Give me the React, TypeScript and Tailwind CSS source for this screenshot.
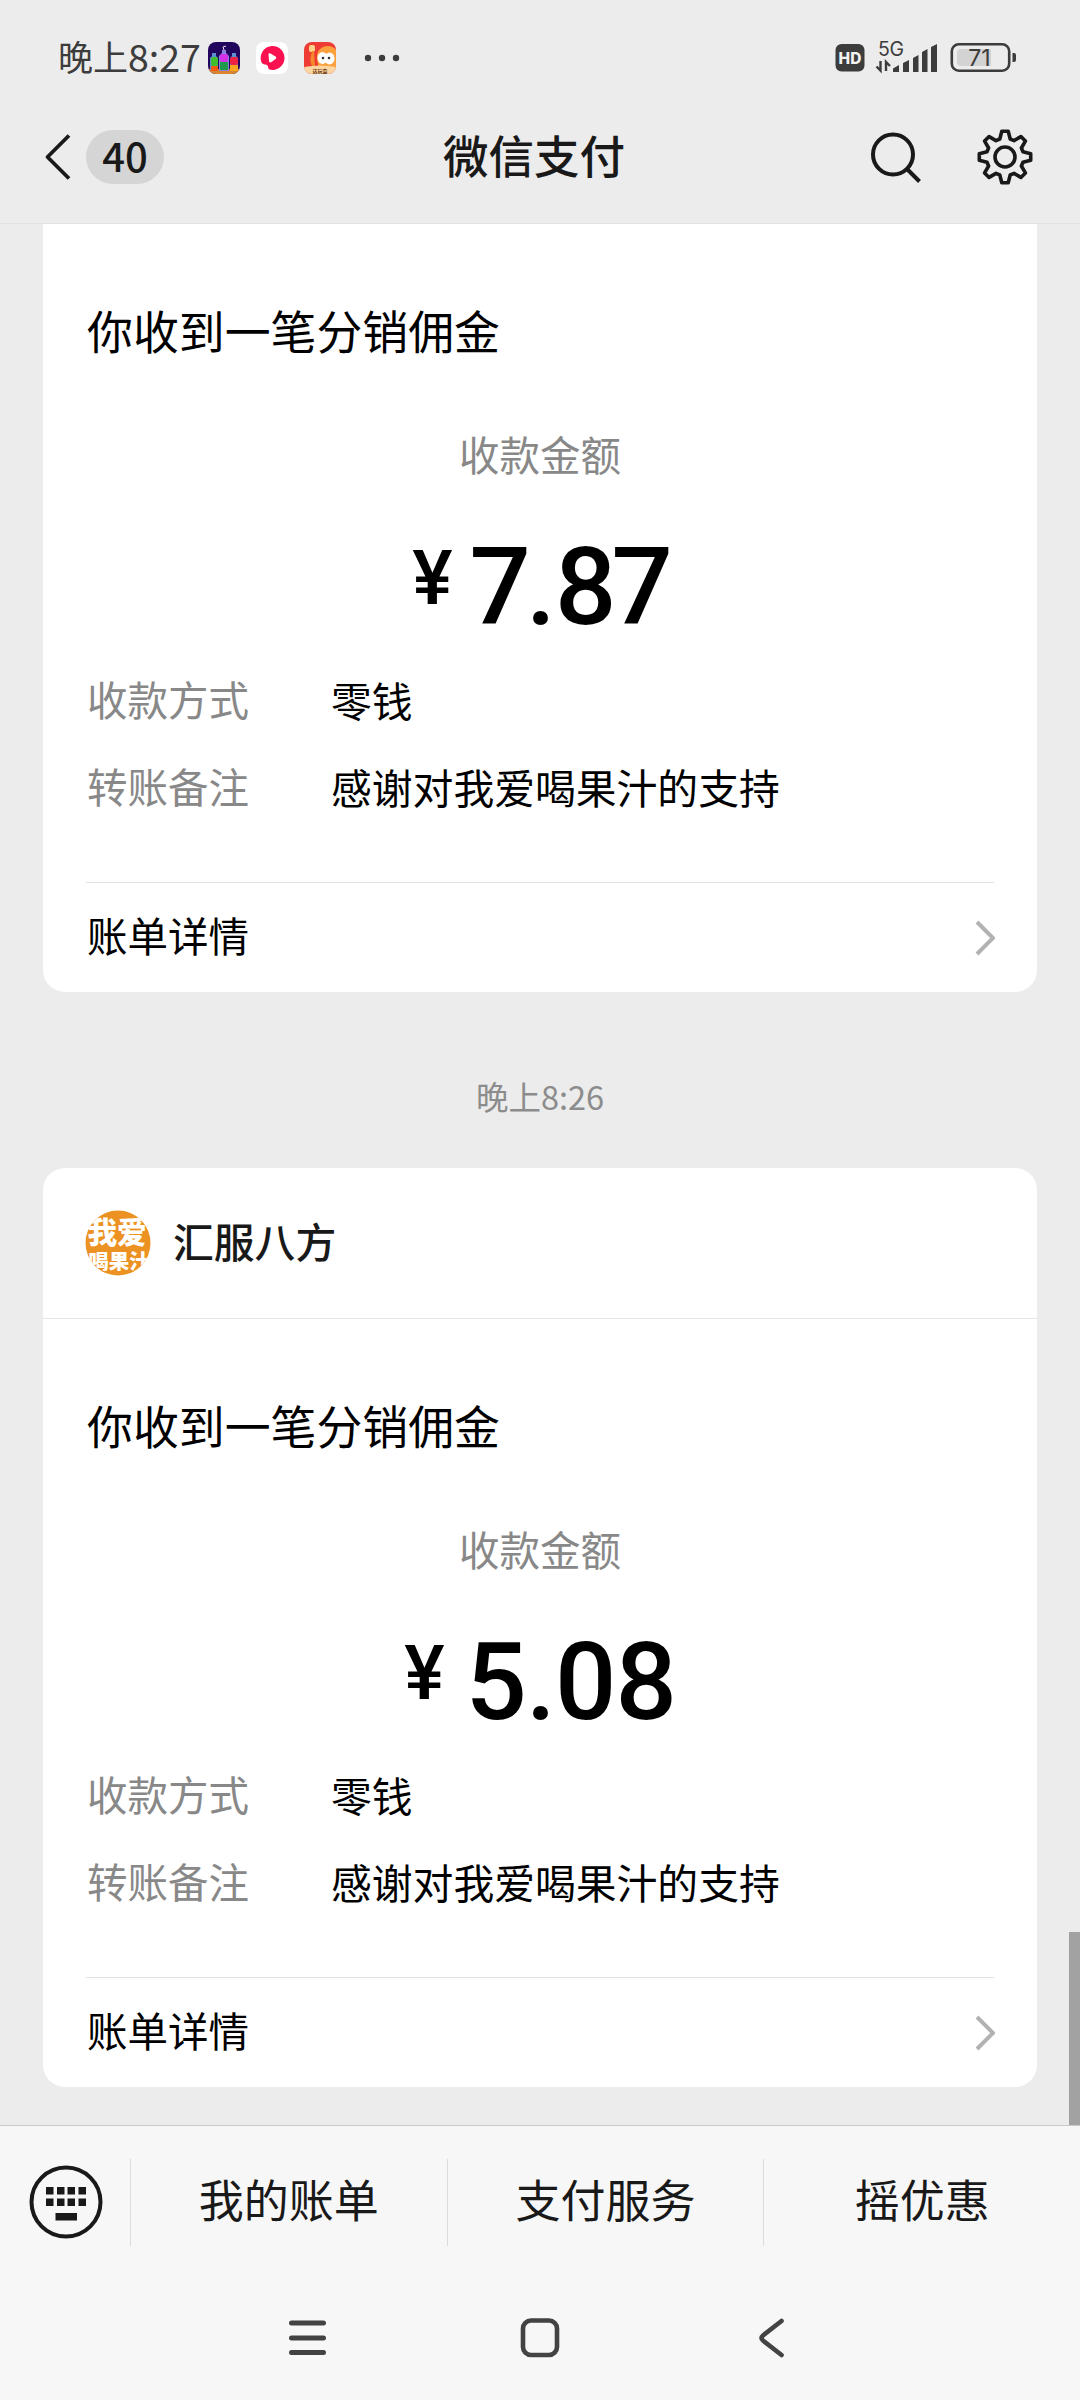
import React from 'react';

interface PaymentCardProps {
  amount: string;
  sender?: string;
}

const MENU_ITEMS = ['我的账单', '支付服务', '摇优惠'];

const StatusBar: React.FC = () => (
  <div className="h-[116px] pt-[32px] pl-[58px] flex items-start text-[#3c3c3c]">
    <div className="h-[49px] w-[150px] flex items-center whitespace-nowrap">
      <span className="text-[35px]">晚上</span>
      <span className="text-[37.5px]">8:27</span>
    </div>
    <div className="h-[52px] flex items-center gap-[16px]">
      <svg width="32" height="32" viewBox="0 0 32 32">
        <defs>
          <clipPath id="app-a"><rect width="32" height="32" rx="8" /></clipPath>
        </defs>
        <g clipPath="url(#app-a)">
          <rect width="32" height="32" fill="#22065e" />
          <rect y="27" width="32" height="5" fill="#d98532" />
          <path d="M4 11h4v3l2 2v12H2V16l2-2z" fill="#5a8fd0" />
          <rect x="3" y="15" width="7" height="9" rx="2" fill="#3fbf2e" />
          <rect x="3" y="24" width="7" height="5" fill="#f25a14" />
          <path d="M14 8h4v3l3 3v15H11V14l3-3z" fill="#8d7fe0" />
          <rect x="12" y="12" width="8" height="8" rx="2" fill="#d531e8" />
          <rect x="12" y="20" width="8" height="8" fill="#1f9a4c" />
          <path d="M24 11h4v3l2 2v12h-8V16l2-2z" fill="#5a8fd0" />
          <rect x="22" y="15" width="8" height="8" rx="2" fill="#ee2244" />
          <rect x="22" y="23" width="8" height="6" fill="#f9a51e" />
          <path d="M16 8l-1-3 3-1" stroke="#f0e0f0" fill="none" />
        </g>
      </svg>
      <svg width="32" height="32" viewBox="0 0 32 32">
        <rect width="32" height="32" rx="8" fill="#fff" />
        <path d="M16 4a12 12 0 1 1-2.500 23.600c-1.500-.3-1-3-2-4.200s-4.500-.6-6-3A12 12 0 0 1 16 4z" fill="#fb1150" />
        <path d="M12.500 12.500c0-1.200 1-1.600 2-1l5 3c1 .7 1 1.800 0 2.500l-4 3c-1.200.8-2.200.6-2.400-.6z" fill="#fff" />
      </svg>
      <svg width="32" height="32" viewBox="0 0 32 32">
        <defs>
          <clipPath id="app-c"><rect width="32" height="32" rx="8" /></clipPath>
        </defs>
        <g clipPath="url(#app-c)">
          <rect width="32" height="32" fill="#ee3b33" />
          <path d="M13 17c-1-8 4-13 11-13 5 0 8 3 9 6v18H15z" fill="#fba03c" />
          <rect x="5" y="3" width="6" height="7" rx="2" fill="#ffd28a" />
          <path d="M8 9c-1 6-3 8 0 15h3l-1-15z" fill="#f48a2c" />
          <ellipse cx="18.500" cy="16" rx="5" ry="6" fill="#fff" />
          <ellipse cx="25.500" cy="16.500" rx="5" ry="6" fill="#fff" />
          <circle cx="19" cy="16" r="1.300" fill="#333" />
          <circle cx="25" cy="16" r="1.300" fill="#333" />
          <path d="M0 25q16-3 32 0v7H0z" fill="#fcd6a0" />
          <text x="16" y="30.500" textAnchor="middle" fontSize="5" fontWeight="700" fill="#6b3510">达玩盒</text>
        </g>
      </svg>
      <svg className="ml-[10px]" width="38" height="8" viewBox="0 0 38 8" fill="#3c3c3c">
        <circle cx="6" cy="4" r="3.200" />
        <circle cx="20" cy="4" r="3.200" />
        <circle cx="34" cy="4" r="3.200" />
      </svg>
    </div>
    <svg className="ml-auto mr-[60px] mt-[6px]" width="186" height="38" viewBox="834 38 186 38">
      <rect x="835.500" y="44" width="29" height="27.500" rx="6" fill="#3c3c3c" />
      <text x="850" y="63.500" textAnchor="middle" fontSize="15.500" fontWeight="800" fill="#f2f2f2" fontFamily="Inter">HD</text>
      <text x="878" y="56" fontSize="19.500" fill="#3c3c3c" fontFamily="Inter" textLength="26">5G</text>
      <path d="M893 72v-3.500l6-3.500v7zM903 72v-9l6-3v12zM913 72V58l5.500-3v17zM922 72V52l5.500-3v23zM931 72V47l6-3v28z" fill="#3c3c3c" />
      <path d="M880.500 61v9.500l-4-4M886 71V62l4 4" fill="none" stroke="#3c3c3c" strokeWidth="2.400" />
      <rect x="951.800" y="44.300" width="57.400" height="26.400" rx="7" fill="none" stroke="#3c3c3c" strokeWidth="2.600" />
      <path d="M961 49h30v17h-30a4 4 0 0 1-4-4v-9a4 4 0 0 1 4-4z" fill="#d3d3d3" />
      <text x="979.500" y="66" textAnchor="middle" fontSize="23" fill="#3c3c3c" fontFamily="Inter">71</text>
      <path d="M1012.500 53h1.500q2 0 2 2v5q0 2-2 2h-1.500z" fill="#3c3c3c" />
    </svg>
  </div>
);

const Header: React.FC = () => (
  <div className="h-[108px] flex items-start justify-between border-b border-[#e2e2e2] pl-[44px] pr-[46px] text-[#191919]">
    <div className="w-[335px] h-[82px] flex items-center">
      <svg width="28" height="48" viewBox="0 0 28 48" fill="none" stroke="#191919" strokeWidth="3.800">
        <path d="M25 2.500L3.500 24 25 45.500" strokeLinejoin="round" />
      </svg>
      <span className="ml-[14px] w-[78px] h-[54px] rounded-full bg-[#d5d5d5] flex items-center justify-center text-[40px] font-medium pb-[4px]">40</span>
    </div>
    <h1 className="h-[82px] flex items-center text-[45.5px] font-medium pb-[5px]">微信支付</h1>
    <div className="w-[345px] h-[82px] flex items-center justify-end gap-[54px]">
      <svg width="52" height="52" viewBox="0 0 52 52" fill="none" stroke="#191919" strokeWidth="4">
        <circle cx="23" cy="23.500" r="20" />
        <path d="M37.500 38.500L49.500 50.500" />
      </svg>
      <svg width="58" height="58" viewBox="-29 -29 58 58" fill="none" stroke="#191919" strokeWidth="3.600" strokeLinejoin="round">
        <circle r="10" />
        <path d="M-3.200-25.700h6.400L5.200-18 9-16.400 15.900-20.400 20.400-15.900 16.400-9 18-5.200 25.700-3.200V3.200L18 5.200 16.400 9 20.400 15.900 15.900 20.400 9 16.400 5.200 18 3.200 25.700h-6.400L-5.200 18-9 16.400-15.900 20.400-20.400 15.900-16.400 9-18 5.200-25.700 3.200v-6.400L-18-5.200-16.400-9-20.400-15.900-15.900-20.400-9-16.400-5.200-18z" />
      </svg>
    </div>
  </div>
);

const Avatar: React.FC = () => (
  <svg width="66" height="66" viewBox="0 0 66 66" fontWeight="900">
    <defs>
      <clipPath id="avatar"><circle cx="33" cy="33" r="32.500" /></clipPath>
    </defs>
    <g clipPath="url(#avatar)">
      <rect width="66" height="66" fill="#ec9222" />
      <text x="32" y="32.500" textAnchor="middle" fontSize="29.500" fill="#fff">我爱</text>
      <text x="34" y="58.500" textAnchor="middle" fontSize="20.500" fill="#fff">喝果汁</text>
    </g>
  </svg>
);

const Amount: React.FC<{ value: string }> = ({ value }) => (
  <span className="text-[108px] tracking-[-1px]">
    {value.split('').map((char, i) => (
      // Sevens sit tighter against their neighbours
      <span key={i} className={char === '7' ? '-mx-[4px]' : ''}>{char}</span>
    ))}
  </span>
);

const InfoRow: React.FC<{ label: string; value: string }> = ({ label, value }) => (
  <div className="h-[87px] flex items-center pl-[1px] text-[40.8px]">
    <span className="w-[244px] text-[40.5px] text-[#888888]">{label}</span>
    <span className="text-black">{value}</span>
  </div>
);

const PaymentCard: React.FC<PaymentCardProps> = ({ amount, sender }) => (
  <div className={sender ? 'bg-white rounded-[22px] w-[994px]' : 'bg-white rounded-b-[22px] w-[994px]'}>
    {sender && (
      <div className="h-[151px] border-b border-[#e8e8e8] flex items-center pl-[42px]">
        <Avatar />
        <span className="ml-[22px] pb-[5px] text-[40.8px] font-medium text-[#191919]">{sender}</span>
      </div>
    )}
    <div className="px-[43px]">
      <div className="h-[210px] flex items-center pl-[1px] text-[45.9px] text-black">你收到一笔分销佣金</div>
      <div className="h-[41px] flex items-center justify-center text-[40.5px] text-[#888888]">收款金额</div>
      <div className="h-[181px] pt-[58px] flex justify-center text-black font-['Roboto'] font-medium leading-none">
        <span className="text-[76px] mt-[7px] mr-[21px]">¥</span>
        <Amount value={amount} />
      </div>
      <div className="h-[226px]">
        <InfoRow label="收款方式" value="零钱" />
        <InfoRow label="转账备注" value="感谢对我爱喝果汁的支持" />
      </div>
      <div className="h-[110px] border-t border-[#e2e2e2] flex items-center justify-between text-[40.5px] text-black">
        <span className="pl-[1px] pb-[5px]">账单详情</span>
        <svg className="-mr-[1px]" width="20" height="38" viewBox="0 0 20 38" fill="none" stroke="#b2b2b2" strokeWidth="4">
          <path d="M2 3L18 19 2 35" />
        </svg>
      </div>
    </div>
  </div>
);

const MenuBar: React.FC = () => (
  <div className="h-[153px] flex items-center border-t border-[#c9c9c9] text-[#191919]">
    <div className="w-[130px] pl-[1px] flex justify-center">
      <svg width="74" height="74" viewBox="0 0 74 74" fill="#191919">
        <circle cx="37" cy="37" r="34.500" fill="none" stroke="#191919" strokeWidth="4" />
        <path d="M17 22h7.500v7.500H17zM28 22h7.500v7.500H28zM38.500 22H46v7.500h-7.500zM49.500 22H57v7.500h-7.500zM17 33.500h7.500V41H17zM28 33.500h7.500V41H28zM38.500 33.500H46V41h-7.500zM49.500 33.500H57V41h-7.500zM26.500 48h21.500v7.500H26.500z" />
      </svg>
    </div>
    {MENU_ITEMS.map(item => (
      <div key={item} className="flex-1 h-[87px] border-l border-[#dcdcdc] flex items-center justify-center text-[45px] pb-[7px]">
        {item}
      </div>
    ))}
  </div>
);

const NavBar: React.FC = () => (
  <div className="h-[122px] pt-[37px] pl-[287px] flex gap-[190px]">
    <svg width="42" height="46" viewBox="0 0 42 46" stroke="#434343" strokeWidth="5" strokeLinecap="round">
      <path d="M4.500 8h32M4.500 23h32M4.500 37.500h32" />
    </svg>
    <svg width="42" height="46" viewBox="0 0 42 46" fill="none" stroke="#434343" strokeWidth="4.600">
      <rect x="4" y="5.500" width="34" height="34.500" rx="8" />
    </svg>
    <svg width="42" height="46" viewBox="0 0 42 46" fill="none" stroke="#434343" strokeWidth="4.600" strokeLinecap="round" strokeLinejoin="round">
      <path d="M30.500 6L12 20.500Q9 23 12 25.500L30.500 40" />
    </svg>
  </div>
);

const App: React.FC = () => {
  return (
    <div className="w-[1080px] h-[2400px] overflow-hidden flex flex-col bg-[#ececec] font-['Noto_Sans_CJK_SC',sans-serif]">
      <StatusBar />
      <Header />
      <div className="relative h-[1901px] flex flex-col items-center">
        <PaymentCard amount="7.87" />
        <div className="h-[176px] pt-[32px] flex items-center text-[32.5px] text-[#8c8c8c]">晚上8:26</div>
        <PaymentCard amount="5.08" sender="汇服八方" />
        {/* Scroll thumb */}
        <div className="absolute right-0 bottom-0 w-[11px] h-[193px] bg-[#a2a2a2]" />
      </div>
      <div className="bg-[#f7f7f7]">
        <MenuBar />
        <NavBar />
      </div>
    </div>
  );
};

export default App;
